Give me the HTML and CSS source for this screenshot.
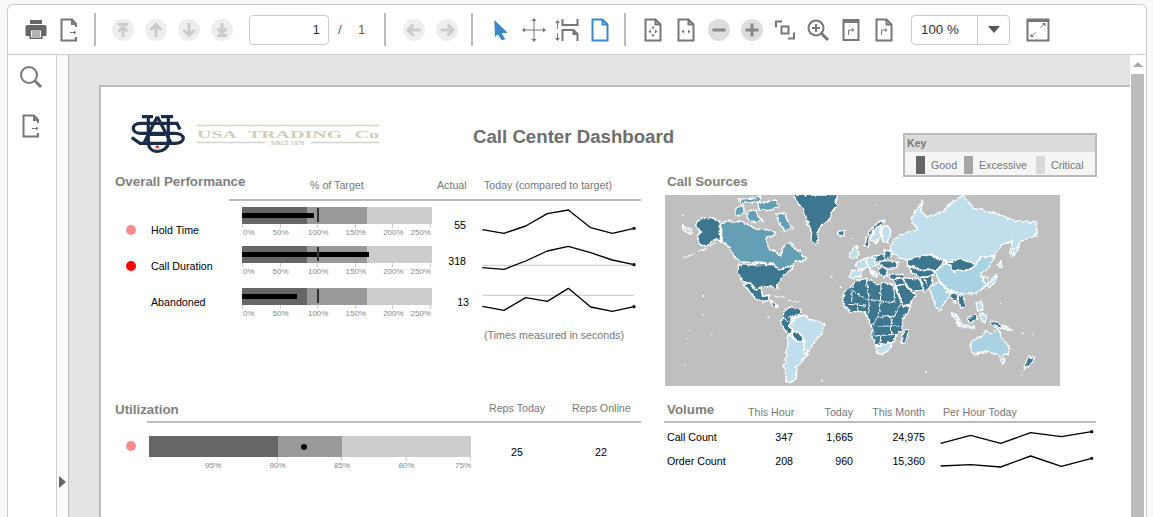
FILE: index.html
```html
<!DOCTYPE html>
<html lang="en">
<head>
<meta charset="utf-8">
<title>Call Center Dashboard</title>
<link rel="stylesheet" href="styles.css">
</head>
<body>
<div class="frame">
  <div class="toolbar">
    <span class="btn first"><svg viewBox="0 0 24 24"><path class="f-dark" d="M6 2h12v4H6zM3.500 7h17a2 2 0 0 1 2 2v9h-4v3H5.500v-3h-4V9a2 2 0 0 1 2-2z"/><rect class="f-white" x="6.500" y="12" width="11" height="8"/><path class="s-dark" d="M8 14h8M8 16h8M8 18h8"/></svg></span>
    <span class="btn"><svg viewBox="0 0 24 24"><path class="s-mid" d="M19 9V6l-4-4.500H4.500v21H19V19M15 1.500V6h4"/><path class="s-thin" d="M13 14.500h6M17 13l2 1.500-2 1.500"/></svg></span>
    <span class="sep sep1"></span>
    <span class="btn gap10"><svg viewBox="0 0 24 24"><circle class="f-circle" cx="12" cy="12" r="11"/><path class="s-light" d="M7 6.500h10M12 19V10M7.500 13.500 12 9l4.500 4.500"/></svg></span>
    <span class="btn"><svg viewBox="0 0 24 24"><circle class="f-circle" cx="12" cy="12" r="11"/><path class="s-light" d="M12 19V6.500M6.500 12 12 6.500l5.500 5.500"/></svg></span>
    <span class="btn"><svg viewBox="0 0 24 24"><circle class="f-circle" cx="12" cy="12" r="11"/><path class="s-light" d="M12 5v12.500M6.500 12l5.500 5.500 5.500-5.500"/></svg></span>
    <span class="btn"><svg viewBox="0 0 24 24"><circle class="f-circle" cx="12" cy="12" r="11"/><path class="s-light" d="M7 17.500h10M12 5v9M7.500 10.500 12 15l4.500-4.500"/></svg></span>
    <span class="page-input">1</span>
    <span class="page-info"><span class="slash">/</span><span class="total">1</span></span>
    <span class="sep"></span>
    <span class="btn gap11"><svg viewBox="0 0 24 24"><circle class="f-circle" cx="12" cy="12" r="11"/><path class="s-light" d="M18.500 12H6M11.500 6.500 6 12l5.500 5.500"/></svg></span>
    <span class="btn"><svg viewBox="0 0 24 24"><circle class="f-circle" cx="12" cy="12" r="11"/><path class="s-light" d="M5.500 12H18M12.500 6.500 18 12l-5.500 5.500"/></svg></span>
    <span class="sep sep8"></span>
    <span class="btn gap11"><svg viewBox="0 0 24 24"><path class="f-blue" d="M5.300 2 18.700 14.700l-6 .6 3.600 6-3.600 1-4-6L6 19z"/></svg></span>
    <span class="btn"><svg viewBox="0 0 24 24"><path class="s-thin" d="M1.500 12h21M12 1.500v21"/><path class="f-mid" d="M12 0l2.500 3h-5zM12 24l2.500-3h-5zM0 12l3-2.500v5zM24 12l-3-2.500v5z"/></svg></span>
    <span class="btn"><svg viewBox="0 0 24 24"><path class="s-mid" d="M7.500 1v6h15V1M7.500 23V12h11l4 4v7M18.500 12v4h4"/><path class="s-thin" d="M2.500 4v7M2.500 15v7"/><path class="f-mid" d="M2.500 2 5 5H0zM2.500 23 5 20H0z"/></svg></span>
    <span class="btn"><svg viewBox="0 0 24 24"><path class="s-blue" d="M4.500 1.500h10l5 5v16h-15zM14.500 1.500v5h5"/></svg></span>
    <span class="sep sep8"></span>
    <span class="btn gap10"><svg viewBox="0 0 24 24"><path class="s-mid" d="M4.500 1.500h10l5 5v16h-15zM14.500 1.500v5h5"/><path class="f-mid" d="M12 8l2 2.500h-4zM12 19l2-2.500h-4zM7.500 13.500l2.500-2v4zM16.500 13.500l-2.500-2v4z"/></svg></span>
    <span class="btn"><svg viewBox="0 0 24 24"><path class="s-mid" d="M4.500 1.500h10l5 5v16h-15zM14.500 1.500v5h5"/><path class="f-mid" d="M7.500 13.500l2.500-2v4zM16.500 13.500l-2.500-2v4z"/></svg></span>
    <span class="btn"><svg viewBox="0 0 24 24"><circle class="f-circle2" cx="12" cy="12" r="11"/><path class="s-grey" d="M5.500 12h13"/></svg></span>
    <span class="btn"><svg viewBox="0 0 24 24"><circle class="f-circle2" cx="12" cy="12" r="11"/><path class="s-grey" d="M5.500 12h13M12 5.500v13"/></svg></span>
    <span class="btn"><svg viewBox="0 0 24 24"><path class="s-mid" d="M9 3.500H3v6M15 20.500h6v-6"/><rect class="s-mid" x="8.500" y="8.500" width="7" height="7"/></svg></span>
    <span class="btn"><svg viewBox="0 0 24 24"><circle class="s-mid" cx="10" cy="10" r="7.500"/><path class="s-mid" d="M10 6v8M6 10h8"/><path class="s-fat" d="M15.500 15.500 22 22"/></svg></span>
    <span class="btn"><svg viewBox="0 0 24 24"><rect class="s-mid" x="4.500" y="2" width="15" height="20"/><path class="s-fat" d="M4 3.500h16"/><path class="s-thin" d="M9.500 17v-5h5M13 10.500l2 1.500-2 1.500"/></svg></span>
    <span class="btn"><svg viewBox="0 0 24 24"><path class="s-mid" d="M4.500 1.500h10l5 5v16h-15zM14.500 1.500v5h5"/><path class="s-thin" d="M9.500 17v-5h5M13 10.500l2 1.500-2 1.500"/></svg></span>
    <span class="zoom-select"><span class="zoom-value">100 %</span><span class="zoom-arrow"><i class="caret"></i></span></span>
    <span class="btn gap11"><svg viewBox="0 0 24 24"><rect class="s-mid" x="1.500" y="1.500" width="21" height="21"/><path class="s-fat" d="M1 2.500h22"/><path class="s-thin" d="M14.500 9.500 19 5.500M5 18.500l4.500-4"/><path class="f-mid" d="M19.500 5v3.500L16 5zM4.500 19v-3.500L8 19z"/></svg></span>
  </div>

  <div class="workspace">
    <aside class="side">
      <span class="side-btn"><svg viewBox="0 0 24 24"><circle class="s-mid" cx="10" cy="10" r="8"/><path class="s-fat" d="M16 16l6 6"/></svg></span>
      <span class="side-btn second"><svg viewBox="0 0 24 24"><path class="s-mid" d="M19 9V6l-4-4.500H4.500v21H19V19M15 1.500V6h4"/><path class="s-thin" d="M13 14.500h6M17 13l2 1.500-2 1.500"/></svg></span>
    </aside>
    <div class="strip"><i class="strip-arrow"></i></div>
    <main class="viewer">
      <div class="report">
        <header class="head">
          <div class="logo">
            <svg class="mark" viewBox="0 0 54 42">
              <path class="mono" d="M12 2.700H23M31 2.700H43M18.300 2.700V28C18.300 34 22 37.500 27.300 37.500S38.300 34 38.300 28V2.700"/>
              <path class="mono" d="M50 15.500 47 9.300H10C6 9.300 3.300 11.500 3.300 14.300S6 19.300 10 19.300H45C50 19.300 53.300 21.500 53.300 24.300S50 29.300 45 29.300H10L1.700 23.500"/>
              <path class="mono" d="M27.300 2.700 14 29M27.300 2.700 41 29M20 20.500H35"/>
              <path class="f-red" d="M27.300 30.500 28 32.100l1.700.1-1.300 1.100.5 1.700-1.600-.9-1.600.9.500-1.700-1.300-1.100 1.700-.1z"/>
            </svg>
            <svg class="brand" viewBox="0 0 182 20">
              <path class="s-tan" d="M0 .5h182M0 17.500h68M114 17.500h68"/>
              <text class="brand-name" x="0" y="12.500" textLength="182" lengthAdjust="spacingAndGlyphs">USA TRADING Co</text>
              <text class="brand-since" x="91" y="19.500" text-anchor="middle">SINCE 1976</text>
            </svg>
          </div>
          <h1 class="title">Call Center Dashboard</h1>
          <div class="key">
            <div class="key-title">Key</div>
            <div class="key-body">
              <i class="swatch s-good"></i><span class="key-label l-good">Good</span>
              <i class="swatch s-exc"></i><span class="key-label l-exc">Excessive</span>
              <i class="swatch s-crit"></i><span class="key-label l-crit">Critical</span>
            </div>
          </div>
        </header>

        <div class="dash">
          <section class="perf">
            <div class="perf-top">
              <h2 class="heading perf-title">Overall Performance</h2>
              <div class="perf-labels">
                <span class="lab lab-target">% of Target</span>
                <span class="lab lab-actual">Actual</span>
                <span class="lab lab-today">Today (compared to target)</span>
              </div>
            </div>
            <div class="perf-body">
              <div class="col-status">
                <i class="dot dot-warn"></i>
                <i class="dot dot-bad"></i>
              </div>
              <div class="col-names">
                <div class="name">Hold Time</div>
                <div class="name">Call Duration</div>
                <div class="name">Abandoned</div>
              </div>
              <div class="col-bullets">
                <div class="bullet">
                  <div class="bands"><i class="band-a"></i><i class="band-b"></i><i class="band-c"></i><i class="measure" style="width:72px"></i><i class="target"></i></div>
                  <div class="axis"><span class="tick start">0%</span><span class="tick">50%</span><span class="tick">100%</span><span class="tick">150%</span><span class="tick">200%</span><span class="tick end">250%</span></div>
                </div>
                <div class="bullet b2">
                  <div class="bands"><i class="band-a"></i><i class="band-b"></i><i class="band-c"></i><i class="measure" style="width:127px"></i><i class="target"></i></div>
                  <div class="axis"><span class="tick start">0%</span><span class="tick">50%</span><span class="tick">100%</span><span class="tick">150%</span><span class="tick">200%</span><span class="tick end">250%</span></div>
                </div>
                <div class="bullet">
                  <div class="bands"><i class="band-a"></i><i class="band-b"></i><i class="band-c"></i><i class="measure" style="width:55px"></i><i class="target"></i></div>
                  <div class="axis"><span class="tick start">0%</span><span class="tick">50%</span><span class="tick">100%</span><span class="tick">150%</span><span class="tick">200%</span><span class="tick end">250%</span></div>
                </div>
              </div>
              <div class="col-actual">
                <div class="val v1">55</div>
                <div class="val v2">318</div>
                <div class="val v3">13</div>
              </div>
              <div class="col-spark">
                <svg class="spark-main" viewBox="156 93 474 345">
                  <path class="ref" d="M157 283H612M157 373H612"/>
                  <path class="line" d="M157 176 222 187 287 165 352 128 415 117 482 170 547 187 612 172"/>
                  <path class="line" d="M157 290 222 295 287 270 352 240 415 226 482 245 547 267 612 281"/>
                  <path class="line" d="M157 406 222 418 287 380 352 391 415 352 482 408 547 421 612 407"/>
                  <circle class="end" cx="612" cy="172" r="5"/><circle class="end" cx="612" cy="281" r="5"/><circle class="end" cx="612" cy="407" r="5"/>
                </svg>
                <div class="lab note">(Times measured in seconds)</div>
              </div>
            </div>
          </section>

          <section class="sources">
            <h2 class="heading src-title">Call Sources</h2>
            <svg class="map" viewBox="15 75 1185 573">
              <defs>
                <filter id="rough" filterUnits="userSpaceOnUse" primitiveUnits="userSpaceOnUse" x="15" y="75" width="1185" height="573">
                  <feTurbulence type="turbulence" baseFrequency="0.045" numOctaves="2" seed="4" result="n"/>
                  <feDisplacementMap in="SourceGraphic" in2="n" scale="11" xChannelSelector="R" yChannelSelector="G"/>
                </filter>
              </defs>
              <rect class="sea" x="15" y="75" width="1185" height="573"/>
              <g class="land">
              <g class="md">
                <path d="M182 155 200 150 215 155 240 150 262 160 285 175 300 172 325 178 345 185 335 195 318 197 318 218 330 235 360 255 362 232 375 218 392 215 402 232 418 240 420 252 435 265 420 270 405 272 395 285 372 287 355 302 340 280 235 272 225 265 205 232 195 220 182 212Z"/>
                <path d="M225 110 245 103 250 125 232 135 225 130Z"/>
                <path d="M258 120 285 118 290 135 305 150 275 155 258 140Z"/>
                <path d="M290 95 345 90 355 105 330 118 295 118Z"/>
                <path d="M345 130 370 125 380 150 395 175 370 178 355 160Z"/>
                <path d="M235 85 300 78 295 92 240 98Z"/>
              </g>
              <g class="lt">
                <path d="M690 225 700 205 725 190 770 175 752 150 760 125 785 90 778 125 800 140 850 120 860 105 905 75 925 95 940 112 1000 125 1060 150 1125 155 1125 195 1095 205 1080 210 1072 225 1052 262 1048 240 1055 210 1020 222 1000 258 960 258 945 280 900 265 860 275 810 250 740 265 720 262 695 250Z"/>
                <path d="M395 450 405 440 430 432 445 445 470 450 492 462 482 490 462 510 455 525 440 545 428 535 432 510 415 485 395 478 385 465Z"/>
                <path d="M382 495 395 500 410 510 430 512 428 535 440 550 425 570 408 590 410 610 395 635 375 630 372 590 378 550Z"/>
                <path d="M645 525 680 517 697 508 685 535 662 550 648 545Z"/>
                <path d="M568 318 570 298 605 298 600 318 578 322Z"/>
                <path d="M582 285 590 272 612 262 622 290 603 298Z"/>
                <path d="M612 262 640 255 645 285 622 290Z"/>
                <path d="M625 290 650 315 640 318Z"/>
                <path d="M578 228 590 225 592 255 578 262 565 262Z"/>
                <path d="M640 178 660 165 660 195 645 218 632 205Z"/>
                <path d="M665 165 685 170 688 195 680 215 665 210Z"/>
                <path d="M65 160 95 180 92 190 65 175Z"/>
                <path d="M975 345 1010 310 1005 335 985 350Z"/>
                <path d="M1008 285 1020 272 1022 290Z"/>
                <path d="M1055 235 1075 225 1062 255Z"/>
                <path d="M875 425 905 455 895 458 872 432Z"/>
                <path d="M890 458 940 466 940 472 892 465Z"/>
                <path d="M945 395 965 390 965 420 950 420Z"/>
                <path d="M960 430 978 432 972 455 960 450Z"/>
                <path d="M1030 462 1055 480 1020 470Z"/>
              </g>
              <g class="lt2">
                <path d="M835 290 860 275 880 300 930 297 945 280 960 258 1000 258 985 290 960 310 975 345 940 370 890 365 860 355 835 330 820 300Z"/>
                <path d="M805 345 835 335 860 355 855 365 880 360 860 380 835 420 815 385Z"/>
                <path d="M930 512 965 495 975 478 990 488 1012 472 1022 500 1045 525 1042 548 1020 560 1000 548 975 540 940 552 930 535Z"/>
                <path d="M1017 565 1032 565 1025 582Z"/>
              </g>
              <g class="dk">
                <path d="M395 72H530L525 95 530 105 510 125 508 145 490 155 478 170 472 190 470 215 460 218 450 205 452 185 445 165 435 140 428 115 410 95Z"/>
                <path d="M108 152 122 143 150 143 178 152V212L168 205 150 212 138 225 122 222 112 210 108 195 125 183 108 170Z"/>
                <path d="M232 282 340 280 352 298 372 290 395 285 388 300 372 310 362 322 352 345 345 355 335 345 310 345 295 350 285 358 268 338 242 330 232 310Z"/>
                <path d="M250 340 268 340 285 358 300 352 305 378 325 372 322 388 305 393 285 385 268 365Z"/>
                <path d="M325 390 340 395 352 410 338 405Z"/>
                <path d="M368 422 385 408 400 412 420 415 418 432 395 440 392 452 385 465 395 482 385 490 372 478 355 452 368 440Z"/>
                <path d="M392 480 415 485 430 510 410 510 395 497Z"/>
                <path d="M425 537 437 540 432 550Z"/>
                <path d="M548 372 565 352 585 330 615 322 630 330 655 342 670 335 700 345 712 375 725 405 750 402 740 425 725 445 722 480 705 490 700 510 680 517 645 525 635 495 635 470 622 445 615 425 590 420 570 425 550 405 545 390Z"/>
                <path d="M728 480 742 478 735 515 722 518Z"/>
                <path d="M530 182 553 178 552 190 535 195Z"/>
                <path d="M618 200 635 170 655 150 672 150 662 160 640 175 628 200 622 228 610 225Z"/>
                <path d="M640 255 672 250 675 268 645 272Z"/>
                <path d="M672 240 690 240 690 262 672 262Z"/>
                <path d="M672 268 712 272 705 290 680 292 650 280Z"/>
                <path d="M650 290 680 295 672 320 655 310Z"/>
                <path d="M680 312 728 310 735 322 690 325Z"/>
                <path d="M695 325 725 320 735 340 705 345Z"/>
                <path d="M738 268 800 250 850 270 830 295 780 298 760 285 740 285Z"/>
                <path d="M745 287 780 298 820 300 815 315 780 320 750 305Z"/>
                <path d="M860 275 900 265 945 280 930 295 880 300Z"/>
                <path d="M705 345 730 340 765 375 750 395 725 405Z"/>
                <path d="M725 320 775 325 790 355 760 365 735 340Z"/>
                <path d="M780 320 815 315 810 345 790 365Z"/>
                <path d="M865 370 885 365 890 385 880 395Z"/>
                <path d="M890 375 905 370 915 405 900 412Z"/>
                <path d="M920 440 945 430 950 445 925 455Z"/>
                <path d="M990 450 1030 465 1012 470 990 460Z"/>
                <path d="M968 320 978 318 978 335 970 335Z"/>
                <path d="M1105 555 1120 565 1105 585 1090 598 1095 580Z"/>
              </g>
              <g class="wl">
                <path d="M575 340 572 390M572 360 620 385M615 322 625 385M660 340 658 395M625 385 700 395M700 345 700 395M625 385 622 430M660 395 650 440 700 435 720 400M650 440 630 470M650 465 715 465M690 435 692 490M640 495 700 490M660 495 655 525M565 400 615 405M590 400 590 420"/>
                <path d="M730 345 760 365M800 345 790 320"/>
                <path d="M385 440 415 435M365 440 395 460"/>
                <path d="M340 375 372 382M385 388 415 392M70 262 100 248M112 242 135 232M145 226 165 214"/>
              </g>
              </g>
              <g class="wl">
                <circle cx="68" cy="136" r="3"/><circle cx="130" cy="378" r="3"/><circle cx="130" cy="435" r="2"/><circle cx="325" cy="442" r="3"/><circle cx="88" cy="482" r="2"/><circle cx="155" cy="494" r="2"/><circle cx="80" cy="505" r="2"/><circle cx="75" cy="585" r="2"/><circle cx="515" cy="320" r="3"/><circle cx="542" cy="352" r="3"/><circle cx="798" cy="607" r="3"/><circle cx="650" cy="105" r="2"/><circle cx="485" cy="632" r="3"/><circle cx="1088" cy="490" r="3"/><circle cx="1118" cy="492" r="2"/><circle cx="1085" cy="615" r="2"/><circle cx="1022" cy="400" r="2"/><circle cx="575" cy="205" r="2"/>
              </g>
            </svg>
          </section>

          <section class="util">
            <div class="util-top">
              <h2 class="heading util-title">Utilization</h2>
              <span class="lab reps-today">Reps Today</span>
              <span class="lab reps-online">Reps Online</span>
            </div>
            <div class="util-rule"></div>
            <div class="util-body">
              <i class="dot dot-warn util-dot"></i>
              <div class="util-chart">
                <div class="util-bands"><i class="ub-a"></i><i class="ub-b"></i><i class="ub-c"></i><i class="util-point"></i></div>
                <div class="util-axis"><span class="utick">95%</span><span class="utick">90%</span><span class="utick">85%</span><span class="utick">80%</span><span class="utick end">75%</span></div>
              </div>
              <div class="util-val uv1">25</div>
              <div class="util-val uv2">22</div>
            </div>
          </section>

          <section class="vol">
            <div class="vol-grid vol-head">
              <h2 class="heading vol-title">Volume</h2>
              <span class="lab num">This Hour</span>
              <span class="lab num">Today</span>
              <span class="lab num">This Month</span>
              <span class="lab per">Per Hour Today</span>
            </div>
            <div class="vol-grid vol-row first-row">
              <span>Call Count</span><span class="num">347</span><span class="num">1,665</span><span class="num">24,975</span>
              <svg class="vol-spark" viewBox="843 100 465 48"><path class="line" d="M845 143 935 119 1025 143 1115 111 1207 123 1298 108"/><circle class="end" cx="1298" cy="108" r="5"/></svg>
            </div>
            <div class="vol-grid vol-row">
              <span>Order Count</span><span class="num">208</span><span class="num">960</span><span class="num">15,360</span>
              <svg class="vol-spark" viewBox="843 172 465 48"><path class="line" d="M845 211 935 207 1025 214 1115 181 1207 212 1298 188"/><circle class="end" cx="1298" cy="188" r="5"/></svg>
            </div>
          </section>
        </div>
      </div>
    </main>
    <div class="scrollbar"><i class="scroll-up"></i><i class="scroll-thumb"></i></div>
  </div>
</div>
</body>
</html>
```

FILE: styles.css
```css
* { box-sizing: border-box; }
html, body { margin: 0; height: 517px; overflow: hidden; }
body { background: #f8f8f8; padding: 4px 6px 0 7px; font-family: "Liberation Sans", Arial, sans-serif; font-size: 10.67px; color: #000; }
i { display: block; font-style: normal; }

.frame { height: 513px; background: #fff; border: 1px solid #ccc; border-bottom: 0; border-radius: 6px 6px 0 0; display: flex; flex-direction: column; }

/* toolbar */
.toolbar { height: 50px; flex: none; border-bottom: 1px solid #ccc; display: flex; align-items: center; padding-left: 12px; }
.btn { width: 33px; height: 24px; flex: none; display: flex; justify-content: center; }
.btn.first { width: 32px; }
.btn svg { width: 24px; height: 24px; }
.gap10 { margin-left: 10px; }
.gap11 { margin-left: 11px; }
.sep { width: 2px; height: 33px; background: #bbb; flex: none; }
.sep1 { margin-left: 9px; }
.sep8 { margin-left: 8px; }
.page-input { width: 80px; height: 30px; margin-left: 11px; border: 1px solid #ccc; border-radius: 4px; display: flex; align-items: center; justify-content: flex-end; padding-right: 8px; font-size: 13.33px; color: #333; }
.page-info { width: 55px; display: flex; font-size: 13.33px; padding-left: 9px; }
.slash { width: 20px; color: #555; }
.total { color: #8a5a20; }
.zoom-select { width: 99px; height: 30px; margin-left: 11px; border: 1px solid #ccc; border-radius: 4px; display: flex; align-items: center; font-size: 13.33px; color: #333; flex: none; }
.zoom-value { width: 66px; padding-left: 9px; height: 28px; line-height: 28px; border-right: 1px solid #ccc; }
.zoom-arrow { flex: 1; display: flex; justify-content: center; }
.caret { width: 0; height: 0; border-left: 6px solid transparent; border-right: 6px solid transparent; border-top: 7px solid #555; }

/* svg paint */
svg path, svg rect, svg circle { fill: none; }
svg .f-dark { fill: #666; }
svg .f-white { fill: #fff; stroke: #666; }
svg .f-circle { fill: #eee; }
svg .f-circle2 { fill: #ddd; }
svg .f-mid { fill: #777; }
svg .f-blue { fill: #3c87c9; }
svg .f-red { fill: #d83a2e; }
.s-dark { stroke: #666; stroke-width: 1; }
.s-mid { stroke: #777; stroke-width: 2; }
.s-thin { stroke: #777; stroke-width: 1; }
.s-fat { stroke: #777; stroke-width: 3; }
.s-light { stroke: #ccc; stroke-width: 3; }
.s-grey { stroke: #888; stroke-width: 3; }
.s-blue { stroke: #3c87c9; stroke-width: 2; }
.s-tan { stroke: #d9d3c5; stroke-width: 1.5; }

/* workspace */
.workspace { flex: 1; min-height: 0; display: flex; }
.side { width: 49px; flex: none; border-right: 1px solid #ccc; display: flex; flex-direction: column; align-items: center; padding: 10px 2px 0 0; }
.side-btn { display: block; width: 24px; height: 24px; }
.side-btn svg { width: 24px; height: 24px; display: block; }
.side-btn.second { margin-top: 25px; }
.strip { width: 12px; flex: none; background: #fafafa; border-right: 1px solid #bbb; position: relative; }
.strip-arrow { position: absolute; left: 2px; top: 421px; width: 0; height: 0; border-top: 6px solid transparent; border-bottom: 6px solid transparent; border-left: 7px solid #666; }
.viewer { flex: 1; min-width: 0; background: #e3e3e3; padding: 30px 0 0 30px; overflow: hidden; }
.scrollbar { width: 16px; flex: none; background: #fff; padding: 5px 2px 0 1px; display: flex; flex-direction: column; align-items: center; }
.scroll-up { width: 0; height: 0; border-left: 5px solid transparent; border-right: 5px solid transparent; border-bottom: 5px solid #aaa; margin-bottom: 7px; margin-top: 2px; }
.scroll-thumb { width: 13px; flex: 1; background: #bbb; }

/* report */
.report { width: 1032px; height: 500px; background: #fff; border: solid #bbb; border-width: 2px 0 0 2px; }
.head { height: 87px; display: flex; align-items: flex-start; }
.logo { display: flex; margin: 27px 0 0 29px; width: 250px; }
.mark { width: 54px; height: 42px; overflow: visible; }
.brand { width: 182px; height: 20px; margin: 11px 0 0 13px; overflow: visible; }
svg .mono { fill: none; stroke: #1a2c4a; stroke-width: 3.200; }
svg .brand-name { font-family: "Liberation Serif", serif; font-size: 11px; font-weight: 700; word-spacing: 4px; fill: #d3ccbb; }
svg .brand-since { font-family: "Liberation Sans", sans-serif; font-size: 5px; font-weight: 700; letter-spacing: .6px; fill: #c8c0ae; }
.title { margin: 39px 0 0 93px; width: 430px; font-size: 18.67px; line-height: 22px; font-weight: 700; color: #6e6e6e; }
.key { margin-top: 46px; width: 194px; height: 44px; border: 2px solid #bbb; background: #f5f5f5; flex: none; position: relative; z-index: 1; }
.key-title { height: 17px; background: #dcdcdc; color: #777; font-weight: 700; font-size: 10.67px; line-height: 16px; padding-left: 2px; }
.key-body { display: flex; height: 23px; align-items: flex-start; color: #777; padding-left: 11px; padding-top: 4px; }
.swatch { width: 9px; height: 18px; flex: none; }
.s-good { background: #666; }
.s-exc { background: #a6a6a6; }
.s-crit { background: #d9d9d9; }
.key-label { line-height: 18px; }
.l-good { width: 33px; margin-left: 6px; }
.l-exc { width: 57px; margin-left: 6px; }
.l-crit { margin-left: 6px; }

.dash { display: grid; grid-template-columns: 564px 1fr; grid-template-rows: 226px 90px; }
.heading { margin: 0; font-size: 13.33px; line-height: 16px; font-weight: 700; color: #808080; }
.lab { color: #777; }

/* overall */
.perf { padding-left: 14px; }
.perf-top { display: flex; height: 27px; }
.perf-title { width: 114px; white-space: nowrap; }
.perf-labels { width: 412px; height: 27px; border-bottom: 2px solid #bbb; display: flex; padding-top: 5px; line-height: 13px; }
.lab-target { margin-left: 81px; width: 54px; white-space: nowrap; }
.lab-actual { margin-left: 73px; width: 30px; }
.lab-today { margin-left: 17px; white-space: nowrap; }
.perf-body { display: flex; }
.col-status { width: 36px; padding: 24px 0 0 11px; }
.dot { width: 10px; height: 10px; border-radius: 50%; }
.dot-warn { background: #ff8c8c; }
.dot-bad { background: #f00; margin-top: 26px; }
.col-names { width: 91px; padding-top: 23px; }
.name { height: 36px; line-height: 13px; white-space: nowrap; }
.col-bullets { width: 190px; }
.bullet { height: 39px; padding-top: 6px; }
.b2 { height: 42px; }
.bands { height: 17px; display: flex; position: relative; }
.band-a { width: 65px; background: #666; }
.band-b { width: 60px; background: #999; }
.band-c { width: 65px; background: #ccc; }
.measure { position: absolute; left: 0; top: 6px; height: 5px; background: #000; }
.target { position: absolute; left: 75px; top: 1px; width: 2px; height: 14px; background: #333; }
.axis { display: flex; justify-content: space-between; font-size: 8px; color: #888; height: 13px; padding-right: 1px; }
.tick { width: 0; border-left: 1px solid #ccc; height: 4px; display: flex; justify-content: center; line-height: 9px; padding-top: 4px; white-space: nowrap; }
.tick.start { justify-content: flex-start; }
.tick.end { justify-content: flex-end; }
.col-actual { width: 34px; text-align: right; padding-top: 18px; }
.val { line-height: 13px; }
.v2 { margin-top: 23px; }
.v3 { margin-top: 28px; position: relative; left: 3px; }
.col-spark { margin-left: 16px; }
.spark-main { width: 158px; height: 115px; display: block; margin-top: 1px; overflow: visible; }
svg .line { stroke: #000; stroke-width: 4; stroke-linejoin: round; }
svg .ref { stroke: #bbb; stroke-width: 2.500; }
svg .end { fill: #000; }
.note { margin: 12px 0 0 2px; line-height: 13px; white-space: nowrap; }

/* map */
.src-title { padding-left: 2px; height: 21px; }
.map { width: 395px; height: 191px; display: block; overflow: hidden; }
.land { filter: url(#rough); }
svg .sea { fill: #bfbfbf; }
.dk path, .md path, .lt path, .lt2 path { stroke: #fff; stroke-width: 4; stroke-linejoin: round; }
svg .dk path { fill: #3e768f; }
svg .md path { fill: #659fb5; }
svg .lt path { fill: #c1deec; }
svg .lt2 path { fill: #a9d3e3; }
svg .wl path { stroke: #fff; stroke-width: 3; }
svg .wl circle { fill: #fff; }

/* utilization */
.util { padding-left: 14px; }
.util-top { height: 21px; display: flex; }
.util-title { width: 374px; padding-top: 2px; }
.reps-today { width: 83px; padding-top: 2px; line-height: 13px; white-space: nowrap; }
.reps-online { padding-top: 2px; line-height: 13px; white-space: nowrap; }
.util-rule { height: 2px; margin-left: 32px; width: 494px; background: #bbb; }
.util-body { display: flex; }
.util-dot { margin: 18px 0 0 11px; flex: none; }
.util-chart { width: 322px; margin: 13px 0 0 13px; flex: none; }
.util-bands { height: 21px; display: flex; position: relative; }
.ub-a { width: 129px; background: #666; }
.ub-b { width: 64px; background: #999; }
.ub-c { width: 129px; background: #ccc; }
.util-point { position: absolute; left: 152px; top: 8px; width: 6px; height: 6px; border-radius: 50%; background: #000; }
.util-axis { display: flex; justify-content: space-between; padding-left: 64px; font-size: 8px; color: #888; }
.utick { width: 0; height: 4px; border-left: 1px solid #ccc; display: flex; justify-content: center; padding-top: 4px; line-height: 9px; white-space: nowrap; }
.utick:first-child { border-left: 0; }
.utick.end { justify-content: flex-end; }
.util-val { width: 40px; text-align: center; margin-top: 22px; line-height: 14px; }
.uv1 { margin-left: 26px; }
.uv2 { margin-left: 44px; }

/* volume */
.vol { margin-left: -1px; width: 432px; }
.vol-grid { display: grid; grid-template-columns: 81px 45px 60px 72px 1fr; padding-left: 3px; }
.vol-head { height: 23px; border-bottom: 2px solid #bbb; }
.vol-title { padding-top: 2px; }
.vol-head .lab { padding-top: 6px; line-height: 13px; white-space: nowrap; }
.vol-head .per { padding-left: 18px; }
.num { text-align: right; white-space: nowrap; }
.vol-row { height: 24px; align-items: center; white-space: nowrap; }
.first-row { margin-top: 2px; }
.vol-spark { width: 155px; height: 16px; margin-left: 15px; display: block; overflow: visible; }
```
